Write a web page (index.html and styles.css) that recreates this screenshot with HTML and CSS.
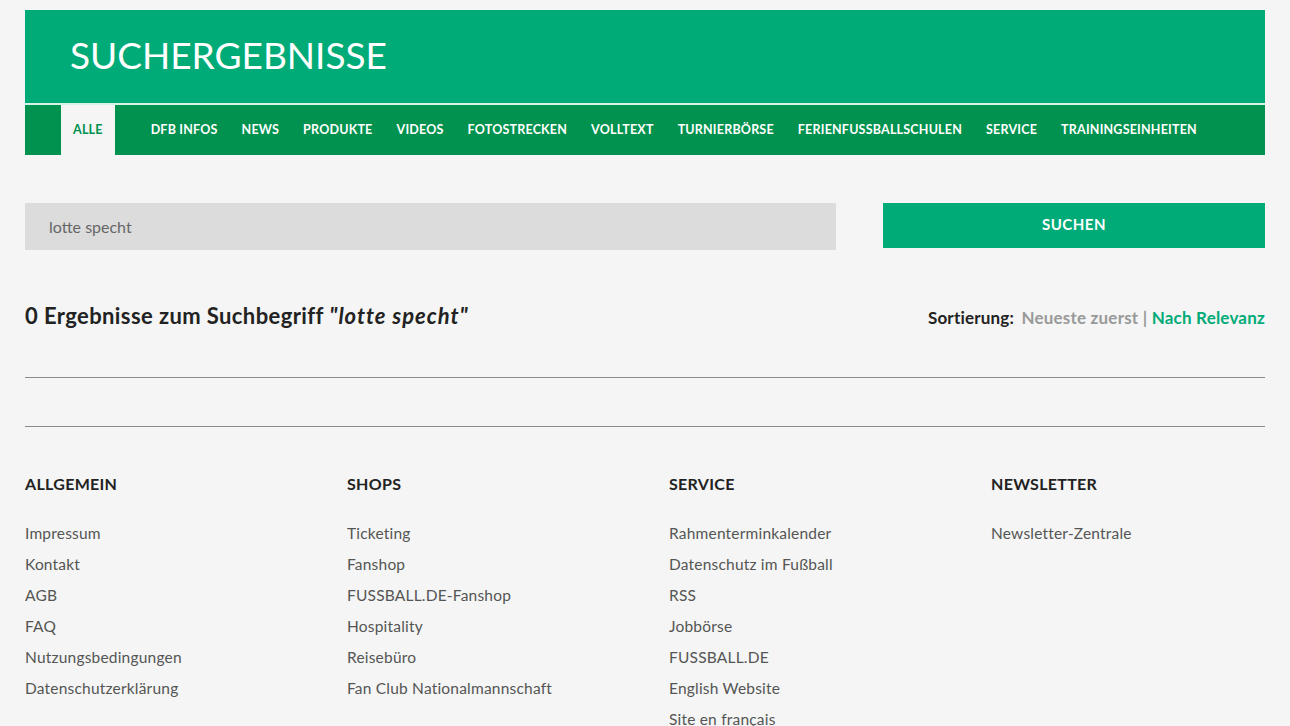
FILE: index.html
```html
<!DOCTYPE html>
<html lang="de">

<head>
    <meta charset="UTF-8">
    <meta name="viewport" content="width=device-width, initial-scale=1.0">
    <title>Suchergebnisse</title>
    <link rel="stylesheet" href="styles.css">
</head>

<body>
    <div class="page">

        <header class="search-head">
            <h1 class="search-title">SUCHERGEBNISSE</h1>
            <nav class="tabs">
                <a class="tab active" href="#">ALLE</a>
                <a class="tab" href="#">DFB INFOS</a>
                <a class="tab" href="#">NEWS</a>
                <a class="tab" href="#">PRODUKTE</a>
                <a class="tab" href="#">VIDEOS</a>
                <a class="tab" href="#">FOTOSTRECKEN</a>
                <a class="tab" href="#">VOLLTEXT</a>
                <a class="tab" href="#">TURNIERBÖRSE</a>
                <a class="tab" href="#">FERIENFUSSBALLSCHULEN</a>
                <a class="tab" href="#">SERVICE</a>
                <a class="tab" href="#">TRAININGSEINHEITEN</a>
            </nav>
        </header>

        <form class="search-form">
            <input type="text" class="search-input" value="lotte specht">
            <button type="button" class="search-btn">SUCHEN</button>
        </form>

        <div class="result-bar">
            <h2 class="result-count">0 Ergebnisse zum Suchbegriff <em>"lotte specht"</em></h2>
            <p class="sorting">
                <span class="sort-label">Sortierung:</span>
                <a href="#" class="sort-link">Neueste zuerst</a> |
                <a href="#" class="sort-link current">Nach Relevanz</a>
            </p>
        </div>

        <hr class="divider first">
        <hr class="divider">

        <footer class="footer">
            <div class="footer-col">
                <h3>ALLGEMEIN</h3>
                <ul>
                    <li><a href="#">Impressum</a></li>
                    <li><a href="#">Kontakt</a></li>
                    <li><a href="#">AGB</a></li>
                    <li><a href="#">FAQ</a></li>
                    <li><a href="#">Nutzungsbedingungen</a></li>
                    <li><a href="#">Datenschutzerklärung</a></li>
                </ul>
            </div>
            <div class="footer-col">
                <h3>SHOPS</h3>
                <ul>
                    <li><a href="#">Ticketing</a></li>
                    <li><a href="#">Fanshop</a></li>
                    <li><a href="#">FUSSBALL.DE-Fanshop</a></li>
                    <li><a href="#">Hospitality</a></li>
                    <li><a href="#">Reisebüro</a></li>
                    <li><a href="#">Fan Club Nationalmannschaft</a></li>
                </ul>
            </div>
            <div class="footer-col">
                <h3>SERVICE</h3>
                <ul>
                    <li><a href="#">Rahmenterminkalender</a></li>
                    <li><a href="#">Datenschutz im Fußball</a></li>
                    <li><a href="#">RSS</a></li>
                    <li><a href="#">Jobbörse</a></li>
                    <li><a href="#">FUSSBALL.DE</a></li>
                    <li><a href="#">English Website</a></li>
                    <li><a href="#">Site en français</a></li>
                </ul>
            </div>
            <div class="footer-col">
                <h3>NEWSLETTER</h3>
                <ul>
                    <li><a href="#">Newsletter-Zentrale</a></li>
                </ul>
            </div>
        </footer>

    </div>
</body>

</html>
```

FILE: styles.css
```css
* {
    margin: 0;
    padding: 0;
    box-sizing: border-box;
}

body {
    background-color: #f4f5f4;
    font-family: Lato, "Open Sans", sans-serif;
    color: #222;
    overflow: hidden;
}

a {
    text-decoration: none;
    color: inherit;
}

.page {
    width: 1240px;
    margin: 10px 25px 0;
}

/* green header with tabs */
.search-head {
    background-color: #00ab78;
}

.search-title {
    height: 93px;
    padding-left: 45px;
    padding-bottom: 4px;
    display: flex;
    align-items: center;
    font-size: 37px;
    font-weight: 400;
    color: #fff;
}

.tabs {
    display: flex;
    height: 52px;
    padding-left: 36px;
    border-top: 2px solid #d8f2e6;
    background-color: #00924e;
}

.tab {
    display: flex;
    align-items: center;
    padding: 0 12px 2px;
    font-size: 12.5px;
    font-weight: 700;
    color: #fff;
    letter-spacing: 0.2px;
}

.tab.active {
    background-color: #f4f5f4;
    color: #00924e;
    margin-right: 24px;
}

/* search form */
.search-form {
    display: flex;
    justify-content: space-between;
    margin-top: 48px;
}

.search-input {
    width: 811px;
    height: 47px;
    border: none;
    background-color: #dcdcdc;
    padding-left: 24px;
    font-family: Lato, sans-serif;
    font-size: 16px;
    color: #666;
    outline: none;
}

.search-btn {
    width: 382px;
    height: 45px;
    padding-bottom: 3px;
    border: none;
    background-color: #00ab78;
    color: #fff;
    font-family: Lato, sans-serif;
    font-size: 15px;
    font-weight: 700;
    letter-spacing: 0.5px;
}

/* result line */
.result-bar {
    display: flex;
    justify-content: space-between;
    align-items: baseline;
    margin-top: 52px;
}

.result-count {
    font-size: 22px;
    font-weight: 700;
    letter-spacing: 0.4px;
    color: #222;
}

.result-count em {
    letter-spacing: 1px;
}

.sorting {
    font-size: 17px;
    font-weight: 700;
    letter-spacing: 0.2px;
    color: #999;
}

.sort-label {
    color: #222;
    margin-right: 3px;
}

.sort-link.current {
    color: #00ab78;
}

.divider {
    border: none;
    border-top: 1px solid #8a8a8a;
    margin-top: 48px;
}

/* footer columns */
.footer {
    display: grid;
    grid-template-columns: 298px 298px 298px 1fr;
    column-gap: 24px;
    margin-top: 47px;
}

.footer-col h3 {
    font-size: 16px;
    font-weight: 700;
    letter-spacing: 0.3px;
    color: #222;
    margin-bottom: 31px;
}

.footer-col ul {
    list-style: none;
}

.footer-col li {
    font-size: 15.5px;
    letter-spacing: 0.2px;
    color: #555;
    height: 31px;
}
```
